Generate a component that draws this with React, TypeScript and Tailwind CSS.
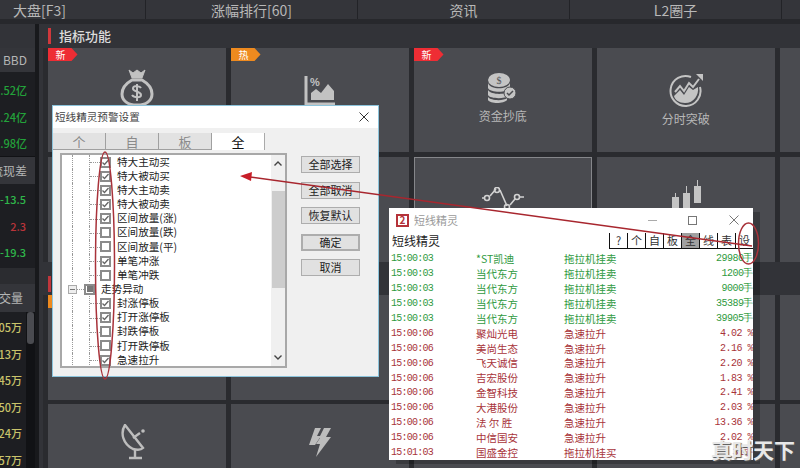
import type { ReactNode } from "react";

const tabs = ["大盘[F3]", "涨幅排行[60]", "资讯", "L2圈子", ""];

const MoneyBag = () => (
  <svg width="34" height="38" viewBox="0 0 34 38" fill="none" stroke="#c2c2c2" strokeWidth="3">
    <path d="M9 1l4 3 4-3 4 3 4-3-3 8H12z" fill="#c2c2c2" strokeWidth="1" />
    <path d="M12 11C5 15 2 20 2 25c0 7 6 11 15 11s15-4 15-11c0-5-3-10-10-14z" />
    <path d="M21 19c-1-2-7-3-8 0-1 4 8 3 8 7 0 3-7 3-9 0M17 15v17" strokeWidth="2" />
  </svg>
);

const PercentChart = () => (
  <svg width="32" height="32" viewBox="0 0 32 32" fill="none">
    <path d="M2 1v28h29" stroke="#c2c2c2" strokeWidth="3" />
    <path d="M7 25V18l5-4 5 4 7-9 6 7v9z" fill="#c2c2c2" />
    <text x="6" y="11" fontSize="11" fontWeight="700" fill="#c2c2c2" fontFamily="Liberation Sans">%</text>
  </svg>
);

const Coins = () => (
  <svg width="31" height="31" viewBox="0 0 31 31">
    <ellipse cx="12" cy="7" rx="11" ry="7" fill="#c4c4c4" />
    <text x="12" y="11" fontSize="10" textAnchor="middle" fill="#55565a" fontFamily="Liberation Serif">$</text>
    <path d="M1 10c2 7 20 7 22 0v5c-2 5-20 5-22 0z" fill="#c4c4c4" />
    <path d="M1 17c3 5 18 5 21 1l-1 5c-3 3-18 3-20-1z" fill="#c4c4c4" />
    <path d="M1 24c3 4 16 4 19 1v2c-3 4-17 4-19 0z" fill="#c4c4c4" />
    <circle cx="23" cy="20" r="6" fill="#c4c4c4" stroke="#4b4c50" strokeWidth="1" />
    <path d="M20 20l2 2 4-4" stroke="#4b4c50" strokeWidth="1.5" fill="none" />
  </svg>
);

const TrendCircle = () => (
  <svg width="34" height="34" viewBox="0 0 34 34" fill="none">
    <path d="M31 14a15 15 0 1 1-9-10" stroke="#c4c4c4" strokeWidth="2" />
    <path d="M6 19l5-6 4 5 5-8 4 4 6-8" stroke="#c4c4c4" strokeWidth="2" />
    <path d="M27 1h7v7z" fill="#c4c4c4" />
    <path d="M5 23l6-6 4 5 5-8 4 3 5-3c1 8-4 16-13 16-6 0-10-3-11-7z" fill="#c4c4c4" />
  </svg>
);

const LineDots = () => (
  <svg width="42" height="24" viewBox="0 0 42 24" fill="none" stroke="#d2d2d2" strokeWidth="1.6">
    <path d="M0 11h3M8 9l6-7M18 3l7 16M28 18l5-6M38 10h4" />
    <circle cx="5" cy="11" r="2.5" />
    <circle cx="15" cy="3" r="2.5" />
    <circle cx="25" cy="20" r="2.5" />
    <circle cx="35" cy="10" r="2.5" />
  </svg>
);

const Candles = () => (
  <svg width="32" height="28" viewBox="0 0 32 28" fill="#c4c4c4">
    <rect x="2" y="17" width="7" height="11" />
    <rect x="5" y="13" width="1" height="5" />
    <rect x="13" y="13" width="7" height="15" />
    <rect x="16" y="6" width="1" height="8" />
    <rect x="24" y="6" width="7" height="17" />
    <rect x="27" y="0" width="1" height="7" />
  </svg>
);

const Dish = () => (
  <svg width="32" height="36" viewBox="0 0 32 36" fill="none" stroke="#bdbdbd" strokeWidth="2.4">
    <path d="M4 1C-1 9 2 20 12 25c4 1 8 1 10-1z" />
    <path d="M12 14l7-5M14 25v8M8 34h13" />
    <circle cx="22" cy="7" r="1.8" fill="#bdbdbd" stroke="none" />
  </svg>
);

const Bolt = () => (
  <svg width="22" height="30" viewBox="0 0 22 30" fill="#bdbdbd">
    <path d="M6 0h6L8 8h4L6 17H0z" />
    <path d="M15 0h7l-5 9h5L7 29l4-13H7l4-6h-1z" />
  </svg>
);

const Badge = ({ label, color }: { label: string; color: string }) => (
  <span
    className={`absolute left-0 top-0 flex h-[13px] w-[30px] items-center pl-[8px] text-[10px] leading-none text-white [clip-path:polygon(0_0,80%_0,100%_50%,80%_100%,0_100%)] ${color}`}
  >
    {label}
  </span>
);

const Card = ({
  icon,
  label,
  badge,
  selected,
  className,
}: {
  icon?: ReactNode;
  label?: string;
  badge?: ReactNode;
  selected?: boolean;
  className?: string;
}) => (
  <div
    className={`relative flex flex-col items-center bg-[#4a4b50] ${selected ? "border border-[#85868a]" : ""} ${className ?? ""}`}
  >
    {badge}
    {icon}
    {label && <span className="mt-[4px] text-[12px] leading-[16px] text-[#b8b8b8]">{label}</span>}
  </div>
);

const LeftRow = ({ text, color }: { text: string; color: string }) => (
  <div className={`flex h-[26.5px] items-center justify-end whitespace-nowrap text-[11px] font-medium ${color}`}>
    {text}
  </div>
);

const LeftColumn = () => (
  <div className="flex w-[35px] shrink-0 flex-col overflow-hidden">
    <div className="h-[24px] shrink-0 bg-[#323338]" />
    <div className="flex h-[24px] shrink-0 items-center justify-end whitespace-nowrap bg-[#34353a] pr-[8px] text-[12px] text-[#b5b5b5]">
      BBD
    </div>
    <div className="h-[84px] shrink-0 bg-[#1d1e22] pr-[8px] pt-[5px]">
      <LeftRow text="1.52亿" color="text-[#23a23a]" />
      <LeftRow text="2.24亿" color="text-[#23a23a]" />
      <LeftRow text="0.98亿" color="text-[#23a23a]" />
    </div>
    <div className="flex h-[28px] shrink-0 items-center justify-end whitespace-nowrap border-t border-[#111215] bg-[#34353a] pr-[8px] text-[12px] text-[#b5b5b5]">
      流现差
    </div>
    <div className="h-[84px] shrink-0 bg-[#1d1e22] pr-[9px] pt-[2px]">
      <LeftRow text="-13.5" color="text-[#2fb64a]" />
      <LeftRow text="2.3" color="text-[#b8343a]" />
      <LeftRow text="-19.3" color="text-[#2fb64a]" />
    </div>
    <div className="h-[16px] shrink-0 bg-[#2b2c30]" />
    <div className="flex h-[28px] shrink-0 items-center justify-end whitespace-nowrap bg-[#34353a] pr-[12px] text-[12px] text-[#b5b5b5]">
      成交量
    </div>
    <div className="flex flex-1 bg-[#1d1e22]">
      <div className="min-w-0 flex-1 pr-[4px] pt-[2px]">
        {["1.05万", "1.13万", "1.45万", "1.50万", "1.24万", "1.57万"].map((t) => (
          <LeftRow key={t} text={t} color="text-[#c9c36a]" />
        ))}
      </div>
      <div className="w-[9px] shrink-0 bg-[#111215] pl-[1px]">
        <div className="h-[32px] w-[7px] rounded-[3px] bg-[#4a4b50]" />
      </div>
    </div>
  </div>
);

const MainPanel = () => (
  <div className="min-w-0 flex-1 overflow-hidden bg-[#2a2b2f]">
    <div className="flex h-[24px] items-center bg-[#323338]">
      <span className="ml-[5px] h-[16px] w-[3px] bg-[#d0383c]" />
      <span className="ml-[8px] text-[13px] font-medium text-[#dcdcdc]">指标功能</span>
    </div>
    <div className="ml-[4.5px] grid w-[900px] grid-cols-[repeat(5,178.5px)] gap-x-[4.5px]">
      <Card className="h-[104px] pt-[21px]" badge={<Badge label="新" color="bg-[#ee2d34]" />} icon={<MoneyBag />} />
      <Card className="h-[104px] pt-[27px]" badge={<Badge label="热" color="bg-[#ee8a1f]" />} icon={<PercentChart />} />
      <Card className="h-[104px] pt-[25px]" badge={<Badge label="新" color="bg-[#ee2d34]" />} icon={<Coins />} label="资金抄底" />
      <Card className="h-[104px] pt-[25px]" icon={<TrendCircle />} label="分时突破" />
      <Card className="h-[104px]" />
    </div>
    <div className="ml-[4.5px] mt-[5px] grid w-[900px] grid-cols-[repeat(5,178.5px)] gap-x-[4.5px]">
      <Card className="h-[105px]" />
      <Card className="h-[105px]" />
      <Card className="h-[105px] pt-[29px]" selected icon={<LineDots />} />
      <Card className="h-[105px] pt-[23px]" icon={<Candles />} />
      <Card className="h-[105px]" />
    </div>
    <div className="flex h-[33px] items-center bg-[#323338]">
      <span className="ml-[5px] mt-[10px] h-[16px] w-[3px] bg-[#c0363c]" />
    </div>
    <div className="ml-[4.5px] grid w-[900px] grid-cols-[repeat(5,178.5px)] gap-x-[4.5px]">
      <Card className="h-[105px]" badge={<Badge label="热" color="bg-[#ee8a1f]" />} />
      <Card className="h-[105px]" />
      <Card className="h-[105px]" />
      <Card className="h-[105px]" />
      <Card className="h-[105px]" />
    </div>
    <div className="ml-[4.5px] mt-[4px] grid w-[900px] grid-cols-[repeat(5,178.5px)] gap-x-[4.5px]">
      <Card className="h-[64px] pt-[20px]" icon={<Dish />} />
      <Card className="h-[64px] pt-[24px]" icon={<Bolt />} />
      <Card className="h-[64px]" />
      <Card className="h-[64px]" />
      <Card className="h-[64px]" />
    </div>
  </div>
);

const CheckBox = ({ on }: { on?: boolean }) => (
  <span className="flex h-[11px] w-[11px] shrink-0 items-center justify-center border-2 border-[#8b8b8b] bg-white">
    {on && (
      <svg width="7" height="7" viewBox="0 0 7 7" fill="none" stroke="#666" strokeWidth="1.3">
        <path d="M0.5 3.5l2 2 4-4.5" />
      </svg>
    )}
  </span>
);

const treeRows = [
  { t: "特大主动买", on: true },
  { t: "特大被动买", on: true },
  { t: "特大主动卖", on: true },
  { t: "特大被动卖", on: true },
  { t: "区间放量(涨)", on: true },
  { t: "区间放量(跌)", on: false },
  { t: "区间放量(平)", on: false },
  { t: "单笔冲涨", on: true },
  { t: "单笔冲跌", on: false },
  { t: "走势异动", parent: true },
  { t: "封涨停板", on: true },
  { t: "打开涨停板", on: true },
  { t: "封跌停板", on: false },
  { t: "打开跌停板", on: false },
  { t: "急速拉升", on: true },
];

const TreeRow = ({ t, on, parent }: { t: string; on?: boolean; parent?: boolean }) =>
  parent ? (
    <div className="flex h-[14.15px] items-center">
      <span className="ml-[6px] flex h-[9px] w-[9px] items-center justify-center border border-[#aaa] bg-[#eee]">
        <span className="h-px w-[5px] bg-[#777]" />
      </span>
      <span className="w-[7px] border-b border-dotted border-[#999]" />
      <span className="flex h-[11px] w-[11px] items-center justify-center border-2 border-[#8b8b8b]">
        <span className="h-[6px] w-[6px] bg-[#777]" />
      </span>
      <span className="ml-[6px] text-[10.6px] leading-none text-[#222]">{t}</span>
    </div>
  ) : (
    <div className="flex h-[14.15px] items-center">
      <span className="ml-[10px] h-full w-[17px] border-l border-dotted border-[#999]" />
      <span className="h-full w-[11px] border-l border-dotted border-[#999] pt-[7px]">
        <span className="block border-t border-dotted border-[#999]" />
      </span>
      <CheckBox on={on} />
      <span className="ml-[6px] whitespace-nowrap text-[10.6px] leading-none text-[#222]">{t}</span>
    </div>
  );

const SettingsDialog = () => {
  const buttons = [
    { t: "全部选择", cls: "mt-0" },
    { t: "全部取消", cls: "mt-[9px]" },
    { t: "恢复默认", cls: "mt-[8px]" },
    { t: "确定", cls: "mt-[10px] border-2 border-[#2a7ab0]" },
    { t: "取消", cls: "mt-[8px]" },
  ];
  return (
    <div className="absolute left-[52px] top-[105px] flex h-[272px] w-[327px] flex-col border border-[#8cc4dc] bg-[#f0f0f0]">
      <div className="flex h-[22px] shrink-0 items-center justify-between bg-white pl-[2px] pr-[9px]">
        <span className="text-[10.6px] text-[#444]">短线精灵预警设置</span>
        <svg width="10" height="10" viewBox="0 0 10 10" stroke="#333" strokeWidth="1">
          <path d="M0.5 0.5l9 9M9.5 0.5l-9 9" />
        </svg>
      </div>
      <div className="mt-[5px] flex h-[17px] shrink-0 text-[13px] leading-[17px]">
        {["个", "自", "板"].map((t) => (
          <span key={t} className="w-[53px] border-b border-r border-[#a0a0a0] bg-[#e2e2e2] text-center text-[#8a8a8a]">
            {t}
          </span>
        ))}
        <span className="w-[53px] border-r border-[#aaa] bg-white text-center text-[#111]">全</span>
      </div>
      <div className="flex pl-[7px] pt-[3px]">
        <div className="flex h-[215px] w-[227px] shrink-0 overflow-hidden border-2 border-[#a8a8a8] bg-white">
          <div className="min-w-0 flex-1 overflow-hidden">
            {treeRows.map((r) => (
              <TreeRow key={r.t} {...r} />
            ))}
          </div>
          <div className="flex w-[14px] shrink-0 flex-col items-center bg-[#f0f0f0]">
            <svg className="mt-[6px]" width="8" height="5" viewBox="0 0 8 5" fill="none" stroke="#444" strokeWidth="1.4">
              <path d="M0.5 4.5L4 1l3.5 3.5" />
            </svg>
            <div className="mt-[25px] h-[97px] w-[13px] bg-[#cdcdcd]" />
            <svg className="mb-[6px] mt-auto" width="8" height="5" viewBox="0 0 8 5" fill="none" stroke="#444" strokeWidth="1.4">
              <path d="M0.5 0.5L4 4l3.5-3.5" />
            </svg>
          </div>
        </div>
        <div className="ml-[14px] flex w-[59px] flex-col pt-[3px]">
          {buttons.map((b) => (
            <div
              key={b.t}
              className={`flex h-[17px] items-center justify-center border border-[#adadad] bg-[#e1e1e1] text-[11px] text-[#222] ${b.cls}`}
            >
              {b.t}
            </div>
          ))}
        </div>
      </div>
    </div>
  );
};

const GREEN = "text-[#2f9a41]";
const RED = "text-[#a8343a]";

const feed = [
  ["15:00:03", "*ST凯迪", "拖拉机挂卖", "29980手", GREEN],
  ["15:00:03", "当代东方", "拖拉机挂卖", "1200手", GREEN],
  ["15:00:03", "当代东方", "拖拉机挂卖", "9000手", GREEN],
  ["15:00:03", "当代东方", "拖拉机挂卖", "35389手", GREEN],
  ["15:00:03", "当代东方", "拖拉机挂卖", "39905手", GREEN],
  ["15:00:06", "聚灿光电", "急速拉升", "4.02 %", RED],
  ["15:00:06", "美尚生态", "急速拉升", "2.16 %", RED],
  ["15:00:06", "飞天诚信", "急速拉升", "2.20 %", RED],
  ["15:00:06", "吉宏股份", "急速拉升", "1.83 %", RED],
  ["15:00:06", "金智科技", "急速拉升", "2.41 %", RED],
  ["15:00:06", "大港股份", "急速拉升", "2.03 %", RED],
  ["15:00:06", "法 尔 胜", "急速拉升", "13.36 %", RED],
  ["15:00:06", "中信国安", "急速拉升", "2.02 %", RED],
  ["15:01:03", "国盛金控", "拖拉机挂买", "31手", RED],
];

const SpiritWindow = () => (
  <div className="absolute left-[389px] top-[208px] flex h-[252px] w-[364px] flex-col overflow-hidden bg-white shadow-[7px_4px_0_rgba(0,0,0,0.22)]">
    <div className="flex h-[24px] shrink-0 items-center pl-[7px]">
      <span className="flex h-[13px] w-[13px] items-center justify-center border-2 border-[#b5333a] text-[10px] font-bold leading-none text-[#b5333a]">
        2
      </span>
      <span className="ml-[5px] text-[11px] text-[#999]">短线精灵</span>
      <span className="ml-[190px] h-px w-[9px] bg-[#aaa]" />
      <span className="ml-[31px] h-[9px] w-[9px] border border-[#777]" />
      <svg className="ml-[32px]" width="10" height="10" viewBox="0 0 10 10" stroke="#777" strokeWidth="1">
        <path d="M0.5 0.5l9 9M9.5 0.5l-9 9" />
      </svg>
    </div>
    <div className="flex h-[18px] shrink-0 items-center justify-between pl-[3px]">
      <span className="text-[12px] text-[#222]">短线精灵</span>
      <div className="flex h-[16px] border-b border-[#111] text-[11px] leading-[15px] text-[#333]">
        {["?", "个", "自", "板", "全", "线", "表", "设"].map((t) => (
          <span key={t} className={`w-[18px] border-l border-[#111] text-center ${t === "全" ? "bg-[#a0a0a0]" : ""}`}>
            {t}
          </span>
        ))}
      </div>
    </div>
    <div className="pt-[2px]">
      {feed.map(([time, name, kind, value, color]) => (
        <div key={time + name + value} className={`flex h-[14.9px] items-center whitespace-nowrap text-[10.5px] leading-none ${color}`}>
          <span className="ml-[2px] w-[85px] font-['Liberation_Mono',monospace] text-[10px] tracking-[-0.75px]">{time}</span>
          <span className="w-[88px]">{name}</span>
          <span>{kind}</span>
          <span className="ml-auto font-['Liberation_Mono',monospace] text-[10px] tracking-[-0.5px]">{value}</span>
        </div>
      ))}
    </div>
  </div>
);

const Annotations = () => (
  <svg className="pointer-events-none absolute inset-0" width="800" height="468" viewBox="0 0 800 468" fill="none">
    <ellipse cx="105" cy="265.5" rx="9.5" ry="113.5" stroke="#a8323a" strokeWidth="1.5" />
    <ellipse cx="748.5" cy="243.5" rx="10" ry="20.5" stroke="#a8323a" strokeWidth="1.5" />
    <path d="M250 177L752 246" stroke="#a8262e" strokeWidth="1.5" />
    <path d="M240 176l12-4-1 9z" fill="#c81e28" />
  </svg>
);

export default function App() {
  return (
    <div className="relative h-[468px] w-[800px] overflow-hidden bg-[#2a2b2f] font-['Noto_Sans_CJK_SC','Noto_Sans',sans-serif]">
      <div className="ml-[-66px] flex h-[19px] w-[1100px] bg-[#34353a]">
        {tabs.map((t, i) => (
          <div key={i} className="flex w-[212px] shrink-0 items-center justify-center border-r border-[#222327] text-[14px] leading-none text-[#b8b8b8]">
            {t}
          </div>
        ))}
      </div>
      <div className="h-[5px] bg-[#27282c]" />
      <div className="flex h-[444px]">
        <LeftColumn />
        <div className="w-[4px] shrink-0 bg-[#18191c]" />
        <div className="w-[4px] shrink-0 bg-[#323338]" />
        <MainPanel />
      </div>
      <SettingsDialog />
      <SpiritWindow />
      <Annotations />
      <span className="absolute bottom-[6px] right-[5px] text-[21px] font-bold leading-[26px] text-[#e8e8e8] [text-shadow:1px_1px_1px_#555]">
        真时天下
      </span>
    </div>
  );
}
